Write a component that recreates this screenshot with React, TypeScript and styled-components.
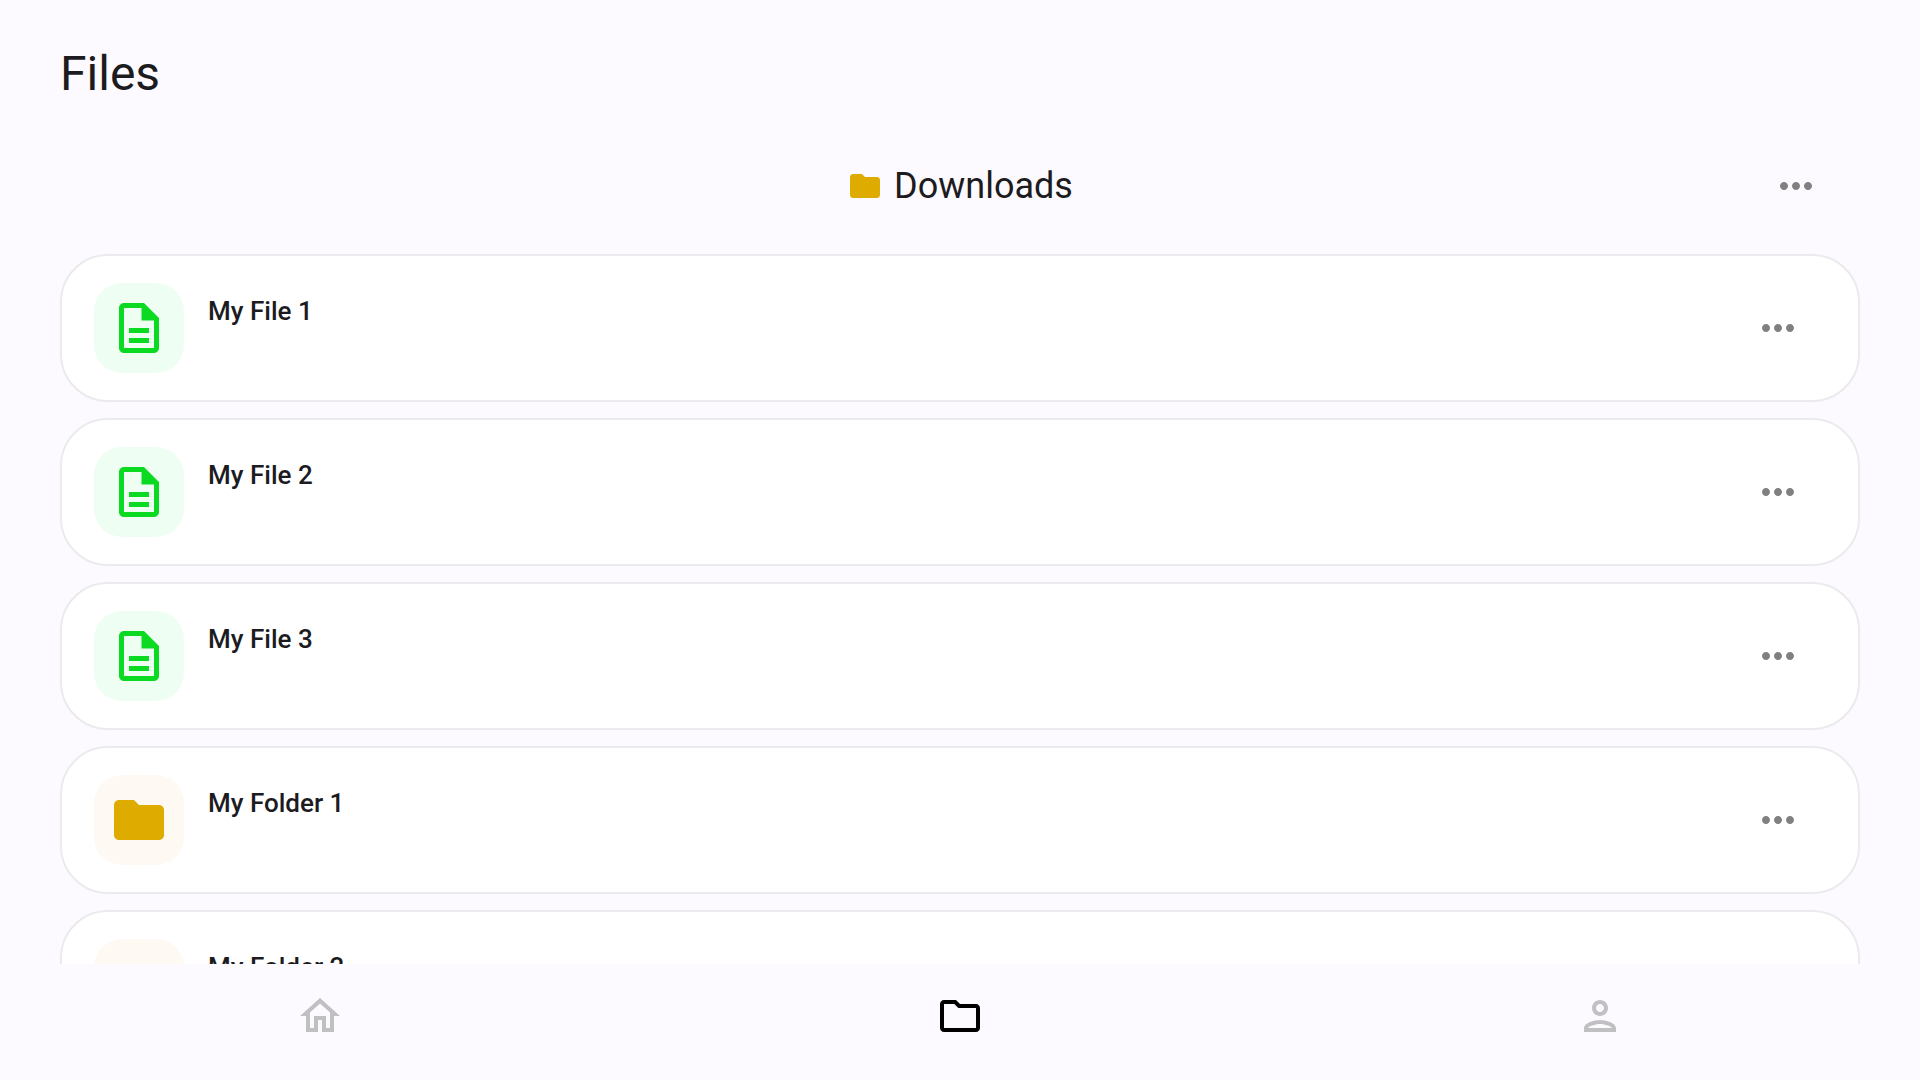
import React from "react";
import styled, { createGlobalStyle } from "styled-components";

const GlobalStyle = createGlobalStyle`
  * { box-sizing: border-box; }
  body {
    margin: 0;
    background: #fcfafe;
    color: #1c1b1f;
    font-family: Roboto, "Noto Sans", sans-serif;
  }
`;

const Screen = styled.div`
  height: 100vh;
  display: flex;
  flex-direction: column;
  overflow: hidden;
`;

const Content = styled.main`
  flex: 1;
  min-height: 0;
  overflow: hidden;
  padding: 44px 60px 0;
`;

const PageTitle = styled.h1`
  margin: 0;
  font-size: 48px;
  line-height: 60px;
  font-weight: 400;
`;

const FolderHeader = styled.header`
  display: grid;
  grid-template-columns: 1fr auto 1fr;
  align-items: center;
  margin-top: 54px;
  padding: 0 40px;
  height: 56px;
`;

const FolderTitle = styled.h2`
  grid-column: 2;
  display: flex;
  align-items: center;
  gap: 11px;
  margin: 0;
  font-size: 36px;
  line-height: 44px;
  font-weight: 400;
`;

const MenuButton = styled.button`
  display: flex;
  justify-self: end;
  margin: 0 0 0 auto;
  padding: 0;
  border: 0;
  background: none;
  color: #808080;
  cursor: pointer;
`;

const FileList = styled.ul`
  display: flex;
  flex-direction: column;
  gap: 16px;
  margin: 40px 0 0;
  padding: 0;
  list-style: none;
`;

const Card = styled.li`
  display: flex;
  align-items: center;
  padding: 27px 56px 27px 32px;
  border: 2px solid #ebeaec;
  border-radius: 48px;
  background: #ffffff;
`;

const Tile = styled.span<{ $color: string; $tint: string }>`
  display: flex;
  align-items: center;
  justify-content: center;
  width: 90px;
  height: 90px;
  border-radius: 28px;
  color: ${(p) => p.$color};
  background: ${(p) => p.$tint};
`;

const FileName = styled.span`
  align-self: flex-start;
  margin-left: 24px;
  padding-top: 12px;
  font-size: 26px;
  line-height: 32px;
  font-weight: 500;
`;

const NavBar = styled.nav`
  display: grid;
  grid-template-columns: repeat(3, 1fr);
  padding: 28px 0 40px;
`;

const NavLink = styled.a<{ $active?: boolean }>`
  display: flex;
  justify-content: center;
  color: ${(p) => (p.$active ? "#000000" : "#c0bfc1")};
`;

const PATHS = {
  folder:
    "M10 4H4c-1.1 0-1.99.9-1.99 2L2 18c0 1.1.9 2 2 2h16c1.1 0 2-.9 2-2V8c0-1.1-.9-2-2-2h-8l-2-2z",
  folderOutline:
    "M9.17 6l2 2H20v10H4V6h5.17M10 4H4c-1.1 0-1.99.9-1.99 2L2 18c0 1.1.9 2 2 2h16c1.1 0 2-.9 2-2V8c0-1.1-.9-2-2-2h-8l-2-2z",
  file:
    "M8 16h8v2H8zm0-4h8v2H8zm6-10H6c-1.1 0-2 .9-2 2v16c0 1.1.89 2 1.99 2H18c1.1 0 2-.9 2-2V8l-6-6zm4 18H6V4h7v5h5v11z",
  more:
    "M6 10c-1.1 0-2 .9-2 2s.9 2 2 2 2-.9 2-2-.9-2-2-2zm12 0c-1.1 0-2 .9-2 2s.9 2 2 2 2-.9 2-2-.9-2-2-2zm-6 0c-1.1 0-2 .9-2 2s.9 2 2 2 2-.9 2-2-.9-2-2-2z",
  home:
    "M12 5.69l5 4.5V18h-2v-6H9v6H7v-7.81l5-4.5M12 3L2 12h3v8h6v-6h2v6h6v-8h3L12 3z",
  person:
    "M12 6c1.1 0 2 .9 2 2s-.9 2-2 2-2-.9-2-2 .9-2 2-2m0 10c2.7 0 5.8 1.29 6 2H6c.23-.72 3.31-2 6-2m0-12C9.79 4 8 5.79 8 8s1.79 4 4 4 4-1.79 4-4-1.79-4-4-4zm0 10c-2.67 0-8 1.34-8 4v2h16v-2c0-2.66-5.33-4-8-4z",
};

function Icon({ name, size }: { name: keyof typeof PATHS; size: number }) {
  return (
    <svg width={size} height={size} viewBox="0 0 24 24" fill="currentColor" aria-hidden="true">
      <path d={PATHS[name]} />
    </svg>
  );
}

type Entry = { name: string; kind: "file" | "folder" };

const ENTRIES: Entry[] = [
  { name: "My File 1", kind: "file" },
  { name: "My File 2", kind: "file" },
  { name: "My File 3", kind: "file" },
  { name: "My Folder 1", kind: "folder" },
  { name: "My Folder 2", kind: "folder" },
];

const KIND_COLORS = {
  file: { color: "#0bda22", tint: "#effef2" },
  folder: { color: "#deac00", tint: "#fef9f2" },
};

const FolderMark = styled.span`
  display: flex;
  color: #deac00;
`;

export default function App() {
  return (
    <>
      <GlobalStyle />
      <Screen>
        <Content>
          <PageTitle>Files</PageTitle>
          <FolderHeader>
            <FolderTitle>
              <FolderMark>
                <Icon name="folder" size={36} />
              </FolderMark>
              Downloads
            </FolderTitle>
            <MenuButton type="button" aria-label="Downloads options">
              <Icon name="more" size={48} />
            </MenuButton>
          </FolderHeader>
          <FileList>
            {ENTRIES.map((entry) => (
              <Card key={entry.name}>
                <Tile $color={KIND_COLORS[entry.kind].color} $tint={KIND_COLORS[entry.kind].tint}>
                  <Icon name={entry.kind} size={60} />
                </Tile>
                <FileName>{entry.name}</FileName>
                <MenuButton type="button" aria-label={`${entry.name} options`}>
                  <Icon name="more" size={48} />
                </MenuButton>
              </Card>
            ))}
          </FileList>
        </Content>
        <NavBar aria-label="Main">
          <NavLink href="#home" aria-label="Home">
            <Icon name="home" size={48} />
          </NavLink>
          <NavLink href="#files" aria-label="Files" aria-current="page" $active>
            <Icon name="folderOutline" size={48} />
          </NavLink>
          <NavLink href="#profile" aria-label="Profile">
            <Icon name="person" size={48} />
          </NavLink>
        </NavBar>
      </Screen>
    </>
  );
}
